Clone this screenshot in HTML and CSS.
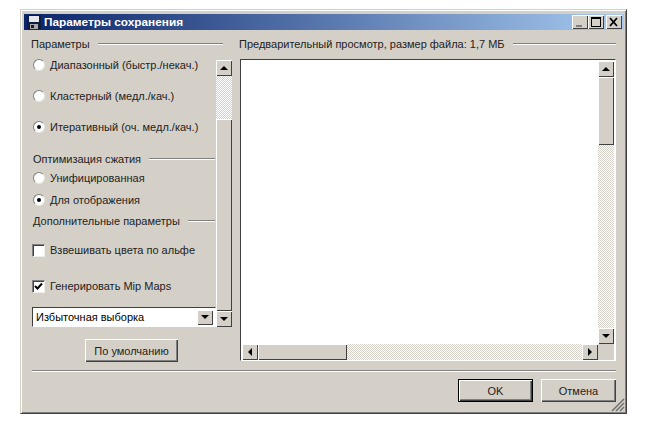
FILE: index.html
```html
<!DOCTYPE html>
<html lang="ru">
<head>
  <meta charset="UTF-8" />
  <title>Параметры сохранения</title>
  <link rel="stylesheet" href="styles.css">
</head>
<body>

  <div class="window">
    <div class="titlebar">
      <svg class="app-icon" width="14" height="14" viewBox="0 0 14 14">
        <rect x="0" y="0" width="14" height="14" fill="#101c3c"/>
        <rect x="2" y="1" width="10" height="6" fill="#e4e6ea"/>
        <rect x="3" y="9" width="8" height="5" fill="#a8a8a8"/>
        <rect x="4" y="10" width="3" height="3" fill="#101c3c"/>
      </svg>
      <span class="title-text">Параметры сохранения</span>
      <div class="title-buttons">
        <div class="win-btn">
          <svg width="16" height="14" viewBox="0 0 16 14"><rect x="4" y="10" width="6" height="2" fill="#808080"/></svg>
        </div>
        <div class="win-btn">
          <svg width="16" height="14" viewBox="0 0 16 14"><path d="M3 2h10v10H3z M4 4v7h8V4z" fill="#000" fill-rule="evenodd"/></svg>
        </div>
        <div class="win-btn win-close">
          <svg width="16" height="14" viewBox="0 0 16 14"><path d="M4 3l7 8M11 3l-7 8" stroke="#000" stroke-width="1.8"/></svg>
        </div>
      </div>
    </div>

    <div class="client">
      <div class="columns">

        <div class="left-col">
          <div class="group-head head-short"><span>Параметры</span><i></i></div>
          <div class="options-panel">
            <div class="options">
              <div class="opt"><span class="radio"></span>Диапазонный (быстр./некач.)</div>
              <div class="opt opt-gap"><span class="radio"></span>Кластерный (медл./кач.)</div>
              <div class="opt opt-gap"><span class="radio on"></span>Итеративный (оч. медл./кач.)</div>

              <div class="group-head sub sub-first"><span>Оптимизация сжатия</span><i></i></div>
              <div class="opt opt-a"><span class="radio"></span>Унифицированная</div>
              <div class="opt opt-b"><span class="radio on"></span>Для отображения</div>

              <div class="group-head sub sub-second"><span>Дополнительные параметры</span><i></i></div>
              <div class="opt opt-c"><span class="check"></span>Взвешивать цвета по альфе</div>
              <div class="opt opt-d">
                <span class="check">
                  <svg width="11" height="11" viewBox="0 0 11 11"><path d="M2 5l2.5 2.5L9 2.5" fill="none" stroke="#000" stroke-width="2"/></svg>
                </span>
                Генерировать Mip Maps
              </div>

              <div class="combo">
                <span class="combo-text">Избыточная выборка</span>
                <div class="sb-btn"><b class="arrow-down"></b></div>
              </div>
            </div>

            <div class="vscroll left-scroll">
              <div class="sb-btn"><b class="arrow-up"></b></div>
              <div class="track left-track"></div>
              <div class="thumb thumb-fill"></div>
              <div class="sb-btn"><b class="arrow-down"></b></div>
            </div>
          </div>

          <div class="default-row">
            <button class="btn default-btn">По умолчанию</button>
          </div>
        </div>

        <div class="right-col">
          <div class="group-head"><span>Предварительный просмотр, размер файла: 1,7 МБ</span><i></i></div>
          <div class="preview">
            <div class="preview-top">
              <div class="canvas"></div>
              <div class="vscroll">
                <div class="sb-btn"><b class="arrow-up"></b></div>
                <div class="thumb preview-thumb"></div>
                <div class="track track-fill"></div>
                <div class="sb-btn"><b class="arrow-down"></b></div>
              </div>
            </div>
            <div class="hscroll">
              <div class="sb-btn"><b class="arrow-left"></b></div>
              <div class="thumb h-thumb"></div>
              <div class="track track-fill"></div>
              <div class="sb-btn"><b class="arrow-right"></b></div>
              <div class="corner"></div>
            </div>
          </div>
        </div>

      </div>

      <div class="separator"></div>

      <div class="footer">
        <button class="btn ok-btn">OK</button>
        <button class="btn">Отмена</button>
      </div>
    </div>

    <svg class="grip" width="14" height="14" viewBox="0 0 14 14">
      <path d="M13 1L1 13M13 5L5 13M13 9L9 13" stroke="#707070" stroke-width="1.5"/>
    </svg>
  </div>

</body>
</html>
```

FILE: styles.css
```css
html, body {
  margin: 0;
  height: 100%;
  background-color: white;
}

body {
  padding: 9px 0 0 20px;
  box-sizing: border-box;
  font-family: "Liberation Sans", Arial, sans-serif;
  font-size: 11px;
  color: #222;
}

.window {
  position: relative;
  width: 607px;
  height: 405px;
  box-sizing: border-box;
  padding: 4px 2px 4px 3px;
  background-color: #d4d0c8;
  border: 1px solid;
  border-color: #d4d0c8 #404040 #404040 #d4d0c8;
  box-shadow: inset 1px 1px 0 white, inset -1px -1px 0 #808080;
}

.titlebar {
  display: flex;
  align-items: center;
  height: 16px;
  padding-left: 3px;
  background: linear-gradient(to right, #0a246a, #a6caf0);
  color: white;
  font-size: 11.8px;
  font-weight: bold;
}

.app-icon {
  margin-right: 3px;
}

.title-buttons {
  display: flex;
  margin-left: auto;
  margin-right: 2px;
}

.win-btn {
  width: 16px;
  height: 14px;
  background-color: #d4d0c8;
  box-shadow: inset 1px 1px 0 white, inset -1px -1px 0 #404040;
}

.win-btn svg {
  display: block;
}

.win-close {
  margin-left: 2px;
}

.client {
  padding: 7px 8px 0 7px;
}

.columns {
  display: flex;
  gap: 6px;
}

.left-col {
  width: 202px;
  flex: none;
}

.right-col {
  width: 377px;
  flex: none;
}

.group-head {
  display: flex;
  align-items: center;
  height: 14px;
}

.group-head span {
  white-space: nowrap;
}

.group-head i {
  flex: 1;
  height: 1px;
  margin-left: 8px;
  background-color: #808080;
  border-bottom: 1px solid white;
}

.head-short {
  width: 192px;
}

/* left side */
.options-panel {
  display: flex;
  margin-top: 7px;
}

.options {
  width: 185px;
  padding-left: 1px;
  box-sizing: border-box;
}

.opt {
  display: flex;
  align-items: center;
  height: 14px;
  padding-left: 1px;
  white-space: nowrap;
}

.opt-gap { margin-top: 17px; }
.opt-a { margin-top: 5px; }
.opt-b { margin-top: 8px; }
.opt-c { margin-top: 15px; padding-left: 0; }
.opt-d { margin-top: 22px; padding-left: 0; }

.sub {
  width: 183px;
  padding-left: 1px;
  box-sizing: border-box;
}

.sub-first { margin-top: 18px; }
.sub-second { margin-top: 7px; }

.radio {
  position: relative;
  flex: none;
  width: 12px;
  height: 12px;
  margin-right: 5px;
  border-radius: 50%;
  background-color: white;
  border: 1px solid;
  border-color: #808080 #e8e6e0 #e8e6e0 #808080;
  box-sizing: border-box;
}

.radio.on::after {
  content: "";
  position: absolute;
  left: 3px;
  top: 3px;
  width: 4px;
  height: 4px;
  border-radius: 50%;
  background-color: black;
}

.check {
  flex: none;
  width: 13px;
  height: 13px;
  margin-right: 5px;
  background-color: white;
  border: 1px solid;
  border-color: #808080 #f0eee8 #f0eee8 #808080;
  box-shadow: inset 1px 1px 0 #404040;
  box-sizing: border-box;
}

.check svg {
  display: block;
}

.combo {
  display: flex;
  align-items: center;
  width: 184px;
  height: 20px;
  margin-top: 14px;
  padding: 2px;
  background-color: white;
  box-sizing: border-box;
  border: 1px solid;
  border-color: #404040 white white #404040;
}

.combo-text {
  flex: 1;
  padding-left: 1px;
  color: #000;
}

.default-row {
  display: flex;
  margin-top: 12px;
  padding-left: 54px;
}

/* scrollbars */
.vscroll {
  display: flex;
  flex-direction: column;
  flex: none;
  width: 16px;
}

.left-scroll {
  margin-top: 2px;
}

.hscroll {
  display: flex;
  height: 16px;
}

.sb-btn {
  display: flex;
  flex: none;
  align-items: center;
  justify-content: center;
  width: 16px;
  height: 16px;
  background-color: #d4d0c8;
  box-shadow: inset 1px 1px 0 white, inset -1px -1px 0 #404040;
}

.combo .sb-btn {
  height: 15px;
}

.thumb {
  background-color: #d4d0c8;
  box-shadow: inset 1px 1px 0 white, inset -1px -1px 0 #404040;
}

.track {
  background: repeating-conic-gradient(#d4d0c8 0 25%, white 0 50%) 0 0 / 2px 2px;
}

.track-fill, .thumb-fill {
  flex: 1;
}

.left-track {
  height: 43px;
}

.preview-thumb {
  height: 68px;
}

.h-thumb {
  width: 89px;
}

.corner {
  width: 16px;
  background-color: #d4d0c8;
}

.arrow-up, .arrow-down {
  width: 0;
  height: 0;
  border-left: 4px solid transparent;
  border-right: 4px solid transparent;
}

.arrow-up { border-bottom: 4px solid black; }
.arrow-down { border-top: 4px solid black; }

.arrow-left, .arrow-right {
  width: 0;
  height: 0;
  border-top: 4px solid transparent;
  border-bottom: 4px solid transparent;
}

.arrow-left { border-right: 4px solid black; }
.arrow-right { border-left: 4px solid black; }

/* preview */
.preview {
  display: flex;
  flex-direction: column;
  width: 376px;
  height: 302px;
  margin-top: 8px;
  margin-left: 1px;
  box-sizing: border-box;
  background-color: white;
  border: 1px solid;
  border-color: #404040 white white #404040;
  padding: 1px 1px 0 1px;
}

.preview-top {
  display: flex;
  flex: 1;
}

.canvas {
  flex: 1;
}

/* bottom */
.separator {
  height: 1px;
  margin: 8px 0 0 1px;
  background-color: #808080;
  border-bottom: 1px solid white;
}

.footer {
  display: flex;
  justify-content: flex-end;
  gap: 8px;
  margin-top: 7px;
}

.btn {
  width: 75px;
  height: 23px;
  padding: 0;
  font-family: "Liberation Sans", Arial, sans-serif;
  font-size: 11px;
  color: #222;
  background-color: #d4d0c8;
  border: none;
  box-shadow: inset 1px 1px 0 white, inset -1px -1px 0 #404040, inset -2px -2px 0 #808080;
}

.ok-btn {
  border: 1px solid black;
}

.default-btn {
  width: 93px;
}

.grip {
  position: absolute;
  right: 1px;
  bottom: 1px;
}
```
